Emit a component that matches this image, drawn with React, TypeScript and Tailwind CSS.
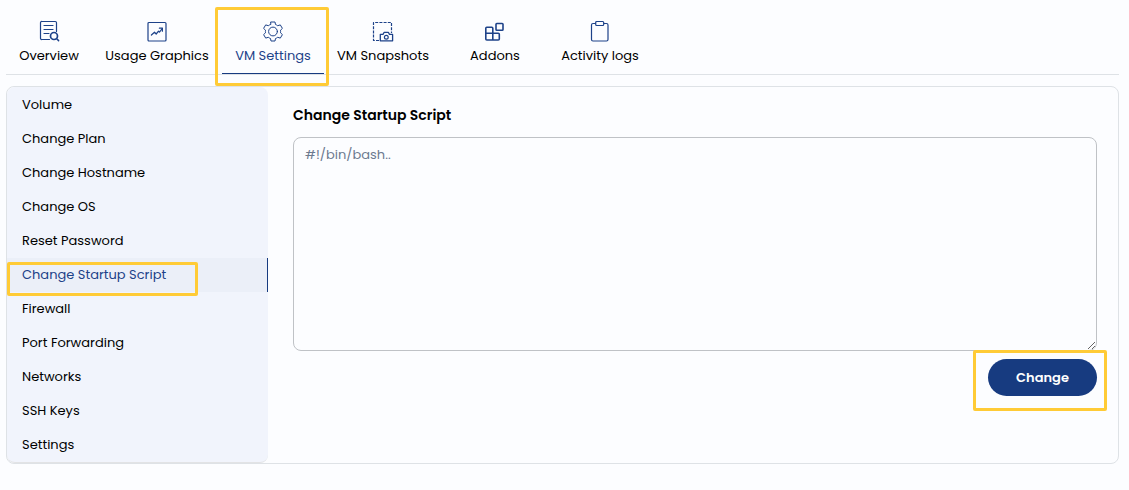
import type { ReactNode } from 'react';

function Icon({ children }: { children: ReactNode }) {
  return (
    <svg
      viewBox="0 0 22 22"
      className="h-[22px] w-[22px] text-[#1d4289]"
      fill="none"
      stroke="currentColor"
      strokeWidth="1.2"
      strokeLinecap="round"
      strokeLinejoin="round"
      aria-hidden="true"
    >
      {children}
    </svg>
  );
}

const OverviewIcon = (
  <Icon>
    <path d="M11.500 19.500H4A1.200 1.200 0 0 1 2.500 18.200V2.700A1.200 1.200 0 0 1 4 1.500H17.300A1.200 1.200 0 0 1 18.500 2.700V11.500" />
    <path d="M6 5.500H15M6 9.500H15M6 13.500H11" />
    <circle cx="16" cy="16" r="3.500" strokeWidth="1.700" />
    <path d="M18.700 18.700L20.600 20.600" strokeWidth="1.500" />
  </Icon>
);

const UsageIcon = (
  <Icon>
    <rect x="2" y="2.500" width="18" height="18.500" rx="1" />
    <path d="M5.400 15L8.500 12.200L10.200 14L12.500 11.200L13.500 12.200L16.300 8.500" strokeWidth="1.200" />
    <path d="M13.400 8.200H16.400V11.200" strokeWidth="1.200" />
  </Icon>
);

const GearIcon = (
  <Icon>
    <circle cx="11" cy="11.500" r="4.400" strokeWidth="1" />
    <path
      strokeWidth="1"
      d="M9 2H13L13.500 4.500Q14.700 4.900 15.700 5.700L18.300 4.900L20.400 8.400L18.500 10.200Q18.700 11.500 18.500 12.800L20.400 14.600L18.300 18.100L15.700 17.300Q14.700 18.100 13.500 18.500L13 21H9L8.500 18.500Q7.300 18.100 6.300 17.300L3.700 18.100L1.600 14.600L3.500 12.800Q3.300 11.500 3.500 10.200L1.600 8.400L3.700 4.900L6.300 5.700Q7.300 4.900 8.500 4.500Z"
    />
  </Icon>
);

const SnapshotIcon = (
  <Icon>
    <path d="M7 20.500H1.500V2.500H19.500V13" strokeDasharray="3 1.200" strokeLinecap="butt" />
    <path d="M8.300 14.400H11L12.200 12.300H16.300L17.500 14.400H20.600V20.800H8.300Z" strokeWidth="1.300" />
    <circle cx="14.300" cy="17.300" r="1.900" />
  </Icon>
);

const AddonsIcon = (
  <Icon>
    <path
      strokeWidth="1.600"
      d="M2.800 7.300H7.800Q8.800 7.300 8.800 8.300V13.300H14.300Q15.300 13.300 15.300 14.300V19Q15.300 20 14.300 20H2.800Q1.800 20 1.800 19V8.300Q1.800 7.300 2.800 7.300ZM1.800 13.300H8.800V20"
    />
    <rect x="12" y="3.500" width="7" height="6.800" rx="0.800" strokeWidth="1.600" />
  </Icon>
);

const ClipboardIcon = (
  <Icon>
    <path d="M6.500 3.500H4A1.500 1.500 0 0 0 2.500 5V19.500A1.500 1.500 0 0 0 4 21H17.500A1.500 1.500 0 0 0 19 19.500V5A1.500 1.500 0 0 0 17.500 3.500H15" />
    <rect x="6.700" y="1.500" width="8" height="4" rx="1" />
  </Icon>
);

const tabs = [
  { label: 'Overview', icon: OverviewIcon, width: 'w-[86px]' },
  { label: 'Usage Graphics', icon: UsageIcon, width: 'w-[130px]' },
  { label: 'VM Settings', icon: GearIcon, width: 'w-[102px]', active: true },
  { label: 'VM Snapshots', icon: SnapshotIcon, width: 'w-[118px]' },
  { label: 'Addons', icon: AddonsIcon, width: 'w-[106px]' },
  { label: 'Activity logs', icon: ClipboardIcon, width: 'w-[104px]' },
];

const menu = [
  'Volume',
  'Change Plan',
  'Change Hostname',
  'Change OS',
  'Reset Password',
  'Change Startup Script',
  'Firewall',
  'Port Forwarding',
  'Networks',
  'SSH Keys',
  'Settings',
];

export default function App() {
  return (
    <div className="min-h-screen bg-[#fcfdff] pr-[10px] pb-6 pl-[6px] font-['Poppins','Inter',sans-serif] text-sm text-black">
      <nav className="flex border-b border-[#dee2e6] pt-5" aria-label="Virtual machine">
        {tabs.map((tab) => (
          <a
            key={tab.label}
            href="#"
            aria-current={tab.active ? 'page' : undefined}
            className={`relative flex h-[54px] shrink-0 flex-col items-center border-b whitespace-nowrap ${tab.width} ${
              tab.active ? 'border-[#173b80] text-[#1d4289]' : 'border-transparent'
            }`}
          >
            {tab.icon}
            <span className="mt-1 text-[13px] leading-5">{tab.label}</span>
            {tab.active && (
              <span className="pointer-events-none absolute -top-[13px] -right-[5px] -bottom-[13px] -left-[7px] z-10 rounded-xs border-3 border-[#ffcb36]" />
            )}
          </a>
        ))}
      </nav>

      <main className="mt-[11px] flex rounded-lg border border-[#dee2e6]">
        <aside className="w-[261px] shrink-0 rounded-lg border-b border-[#e2e3e5] bg-[#f1f4fc] pt-px">
          <ul>
            {menu.map((item) => {
              const active = item === 'Change Startup Script';
              return (
                <li key={item} className="relative">
                  <a
                    href="#"
                    aria-current={active ? 'page' : undefined}
                    className={`flex h-[34px] items-center border-r pb-px pl-[15px] text-[13px] leading-5 ${
                      active ? 'border-[#173b80] bg-[#ebeff8] text-[#1d4289]' : 'border-transparent'
                    }`}
                  >
                    {item}
                  </a>
                  {active && (
                    <span className="pointer-events-none absolute top-1 right-[70px] -bottom-1 left-0 rounded-xs border-3 border-[#ffcb36]" />
                  )}
                </li>
              );
            })}
          </ul>
        </aside>

        <form className="flex min-w-0 flex-1 flex-col pt-[18px] pr-[21px] pl-[25px]" onSubmit={(e) => e.preventDefault()}>
          <label htmlFor="script" className="text-sm leading-5 font-semibold">
            Change Startup Script
          </label>
          <textarea
            id="script"
            placeholder="#!/bin/bash.."
            className="mt-3 block h-[214px] w-full rounded-lg border border-[#bfc2c6] bg-transparent px-[11px] py-[7px] text-[13px] leading-5 placeholder:text-[#6c7a90]"
          />
          <div className="relative mt-2 self-end">
            <button type="submit" className="h-[37px] w-[109px] rounded-full bg-[#173b80] pt-px text-[13px] font-semibold text-white">
              Change
            </button>
            <span className="pointer-events-none absolute -top-[9px] -right-[10px] -bottom-[15px] -left-[15px] rounded-xs border-3 border-[#ffcb36]" />
          </div>
        </form>
      </main>
    </div>
  );
}
